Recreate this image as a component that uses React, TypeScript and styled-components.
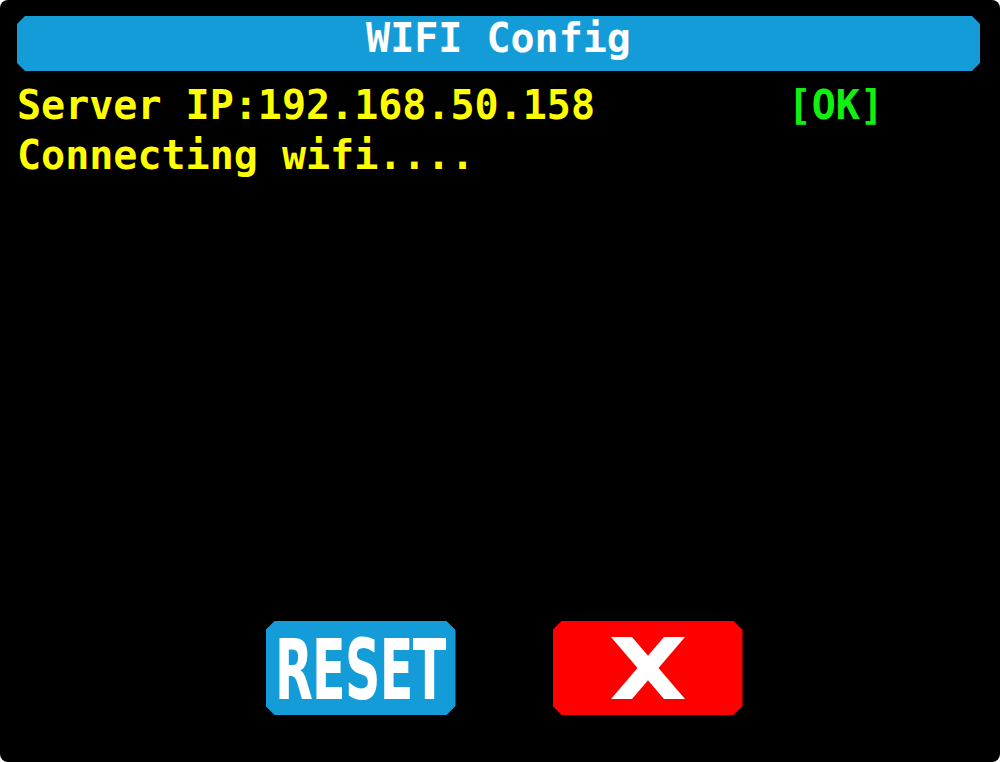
import React from 'react';
import styled, { createGlobalStyle } from 'styled-components';

const GlobalStyle = createGlobalStyle`
  html, body {
    margin: 0;
    padding: 0;
    background: #ffffff;
  }
`;

const chamfer = (c: number) => `polygon(
  ${c}px 0, calc(100% - ${c}px) 0, 100% ${c}px, 100% calc(100% - ${c}px),
  calc(100% - ${c}px) 100%, ${c}px 100%, 0 calc(100% - ${c}px), 0 ${c}px
)`;

const Screen = styled.div`
  width: 1000px;
  height: 762px;
  box-sizing: border-box;
  background: #000000;
  border-radius: 8px;
  display: flex;
  flex-direction: column;
  padding: 16px 20px 47px 17px;
  font-family: 'DejaVu Sans Mono', 'Liberation Mono', monospace;
  font-weight: bold;
`;

const TitleBar = styled.div`
  height: 55px;
  box-sizing: border-box;
  padding-top: 2px;
  background: #149cd9;
  clip-path: ${chamfer(8)};
  color: #ffffff;
  font-size: 40px;
  line-height: 40px;
  text-align: center;
  white-space: pre;
`;

const Console = styled.div`
  margin-top: 9px;
  display: flex;
  flex-direction: column;
  font-size: 40px;
  line-height: 50px;
  white-space: pre;
`;

const Line = styled.div`
  display: flex;
`;

const Text = styled.span<{ $col?: number; $color: string }>`
  color: ${p => p.$color};
  ${p => (p.$col ? `width: ${p.$col}ch;` : '')}
`;

const ButtonRow = styled.div`
  margin-top: auto;
  display: flex;
  justify-content: center;
  gap: 97px;
  padding-left: 11px;
`;

const Button = styled.div<{ $bg: string }>`
  width: 190px;
  height: 94px;
  background: ${p => p.$bg};
  clip-path: ${chamfer(9)};
  display: flex;
  align-items: center;
  justify-content: center;
  color: #ffffff;
`;

const ResetLabel = styled.span`
  display: inline-block;
  font-family: 'DejaVu Sans', 'Liberation Sans', sans-serif;
  font-stretch: condensed;
  font-weight: bold;
  font-size: 84px;
  line-height: 84px;
  letter-spacing: -1px;
  margin: 4px -45px 0;
  transform: scaleX(0.65);
`;

const CloseIcon = () => (
  <svg width="74" height="62" viewBox="0 0 74 62">
    <polygon points="0,0 21,0 74,62 53,62" fill="#ffffff" />
    <polygon points="53,0 74,0 21,62 0,62" fill="#ffffff" />
  </svg>
);

const App: React.FC = () => {
  return (
    <>
      <GlobalStyle />
      <Screen>
        <TitleBar>WIFI Config</TitleBar>
        <Console>
          <Line>
            <Text $color="#ffff00" $col={32}>Server IP:192.168.50.158</Text>
            <Text $color="#11f011">[OK]</Text>
          </Line>
          <Line>
            <Text $color="#ffff00">Connecting wifi....</Text>
          </Line>
        </Console>
        <ButtonRow>
          <Button $bg="#149cd9">
            <ResetLabel>RESET</ResetLabel>
          </Button>
          <Button $bg="#fe0000">
            <CloseIcon />
          </Button>
        </ButtonRow>
      </Screen>
    </>
  );
};

export default App;
